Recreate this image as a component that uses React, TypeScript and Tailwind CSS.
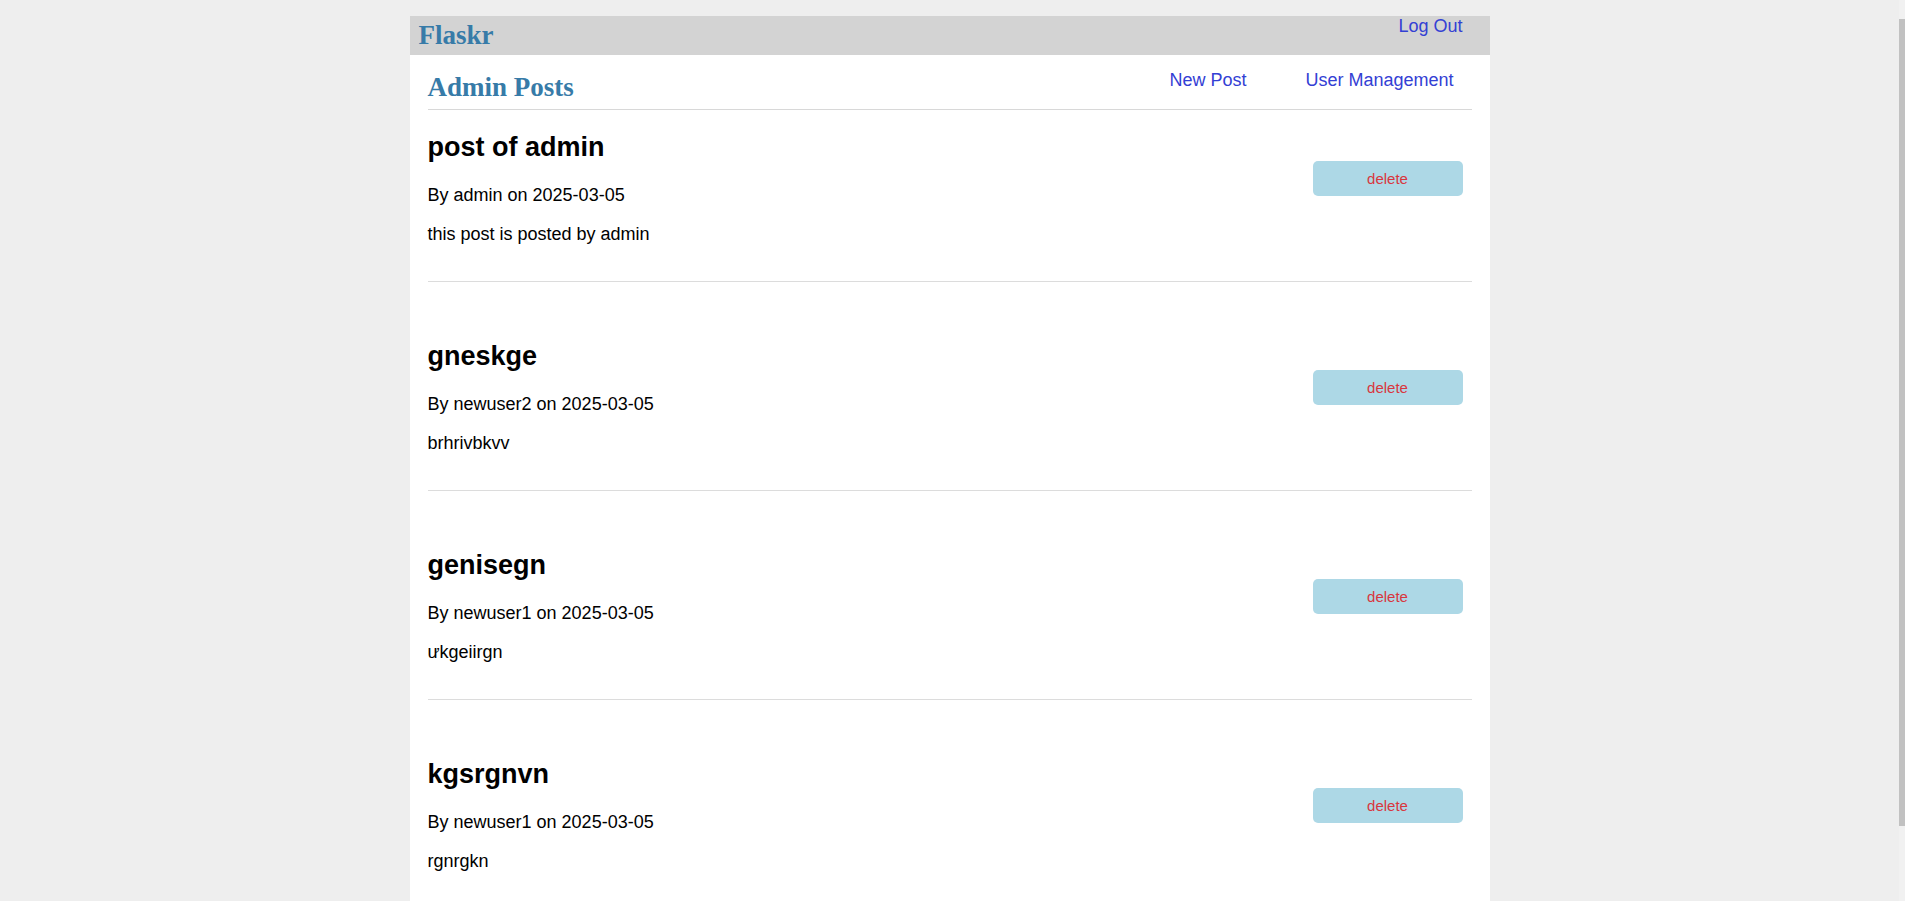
import React from 'react'

const posts = [
  { title: 'post of admin', author: 'admin', date: '2025-03-05', body: 'this post is posted by admin' },
  { title: 'gneskge', author: 'newuser2', date: '2025-03-05', body: 'brhrivbkvv' },
  { title: 'genisegn', author: 'newuser1', date: '2025-03-05', body: 'ưkgeiirgn' },
  { title: 'kgsrgnvn', author: 'newuser1', date: '2025-03-05', body: 'rgnrgkn' },
]

const sans = { fontFamily: '"Liberation Sans", Arial, sans-serif' }

function Nav() {
  return (
    <nav className="flex h-[39px] items-start bg-[#d3d3d3] pl-[8px] pr-[27px]">
      <h1 className="flex-1 self-center font-['Liberation_Serif',serif] text-[27px] font-bold leading-[31px] text-[#377ba8]">
        <a href="#" className="px-[1px]">Flaskr</a>
      </h1>
      <a href="#" className="text-[18px] leading-[21px] text-[#3340d4]">
        Log Out
      </a>
    </nav>
  )
}

function PostItem({ post, first }: { post: (typeof posts)[number]; first: boolean }) {
  return (
    <article className={first ? 'flex items-start pt-[22px] pb-[36px]' : 'flex items-start pt-[59px] pb-[36px]'}>
      <div className="flex-1">
        <h2 className="text-[27px] font-bold leading-[31px] text-black">{post.title}</h2>
        <p className="mt-[22px] text-[18px] leading-[21px] text-black">
          By {post.author} on {post.date}
        </p>
        <p className="mt-[18px] text-[18px] leading-[21px] text-black">{post.body}</p>
      </div>
      <button className="mr-[9px] mt-[29px] flex h-[35px] w-[150px] items-center justify-center rounded-[5px] bg-[#add8e6] pt-[2px] text-[15px] text-[#d9363e]">
        delete
      </button>
    </article>
  )
}

export default function App() {
  return (
    <div className="flex h-screen overflow-hidden bg-[#eeeeee]" style={sans}>
      <main className="flex-1 overflow-hidden pt-4">
        <div className="mx-auto min-h-full w-[1080px] bg-white">
          <Nav />
          <section className="pl-[18px] pr-[18px]">
            <header className="flex items-end border-b border-[#d8d8d8]">
              <h1 className="mt-[17px] mb-[7px] flex-1 font-['Liberation_Serif',serif] text-[27px] font-bold leading-[30px] text-[#377ba8]">
                Admin Posts
              </h1>
              <div className="mb-[18px] mr-[18px] flex gap-[59px] text-[18px] leading-[21px] text-[#3340d4]">
                <a href="#">New Post</a>
                <a href="#">User Management</a>
              </div>
            </header>
            {posts.map((post, i) => (
              <div key={i}>
                {i > 0 && <hr className="border-0 border-t border-[#dcdcdc]" />}
                <PostItem post={post} first={i === 0} />
              </div>
            ))}
          </section>
        </div>
      </main>
      {/* scrollbar strip */}
      <div className="w-[6px] bg-[#f1f1f1] pt-[19px]">
        <div className="h-[807px] w-full bg-[#c1c1c1]" />
      </div>
    </div>
  )
}
